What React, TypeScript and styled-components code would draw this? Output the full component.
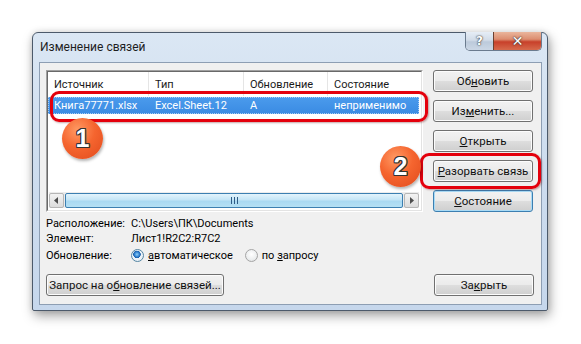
import React from "react";
import styled, { createGlobalStyle } from "styled-components";

const GlobalStyle = createGlobalStyle`
  html, body {
    margin: 0;
    padding: 0;
    background: #ffffff;
  }
  body {
    font-family: Roboto, "Noto Sans", sans-serif;
    font-size: 11px;
    color: #000;
  }
`;

const Stage = styled.div`
  position: relative;
  width: 581px;
  height: 344px;
  padding: 32px 0 0 32px;
  box-sizing: border-box;
`;

const Frame = styled.div`
  width: 516px;
  height: 279px;
  box-sizing: border-box;
  border: 1px solid #4c5a6b;
  border-radius: 6px 6px 2px 2px;
  background: linear-gradient(180deg, #dbe7f4 0%, #cfdeef 40%, #c6d7ec 100%);
  box-shadow: 2px 5px 12px rgba(0, 0, 0, 0.35), 0 0 6px rgba(0, 0, 0, 0.12);
  padding: 0 5px 5px 6px;
  display: flex;
  flex-direction: column;
`;

const TitleBar = styled.div`
  height: 29px;
  display: flex;
  align-items: flex-start;
  justify-content: space-between;
`;

const Title = styled.div`
  padding: 7px 0 0 1px;
  font-size: 12px;
  color: #1e1e1e;
`;

const Controls = styled.div`
  display: flex;
  margin-top: -1px;
  border: 1px solid #6b7b8e;
  border-top: none;
  border-radius: 0 0 5px 5px;
  overflow: hidden;
`;

const CtrlButton = styled.div<{ $close?: boolean }>`
  width: ${(p) => (p.$close ? "47px" : "27px")};
  height: 18px;
  display: flex;
  align-items: center;
  justify-content: center;
  font-family: "DejaVu Sans", sans-serif;
  font-weight: bold;
  font-size: ${(p) => (p.$close ? "14px" : "12px")};
  color: #fff;
  text-shadow: 0 0 2px #333, 0 0 1px #333;
  border-left: ${(p) => (p.$close ? "1px solid #6b4030" : "none")};
  background: ${(p) =>
    p.$close
      ? "linear-gradient(180deg, #eab59c 0%, #dc8e70 40%, #c8402a 55%, #d66a4c 100%)"
      : "linear-gradient(180deg, #e6edf6 0%, #d2dce8 45%, #bccadb 55%, #cbd7e5 100%)"};
`;

const Client = styled.div`
  flex: 1;
  border: 1px solid #8d9eb3;
  background: #f0f0f0;
  padding: 7px 7px 0 6px;
  display: flex;
  flex-direction: column;
`;

const TopArea = styled.div`
  display: flex;
  gap: 10px;
`;

const ListView = styled.div`
  width: 377px;
  height: 142px;
  box-sizing: border-box;
  border: 1px solid;
  border-color: #a0a0a0 #ffffff #ffffff #a0a0a0;
  display: flex;
`;

const ListInner = styled.div`
  flex: 1;
  border: 1px solid;
  border-color: #696969 #e3e3e3 #e3e3e3 #696969;
  background: #fff;
  display: flex;
  flex-direction: column;
`;

const HeaderRow = styled.div`
  display: grid;
  grid-template-columns: 101px 95px 84px 1fr;
  height: 24px;
`;

const HeaderCell = styled.div`
  display: flex;
  align-items: center;
  padding-left: 6px;
  border-right: 1px solid #e5e5e5;
  color: #1a1a1a;
  &:last-child {
    border-right: none;
  }
`;

const DataRow = styled.div`
  display: grid;
  grid-template-columns: 101px 95px 84px 1fr;
  height: 17px;
  margin: 1px 2px 0 0;
  background: linear-gradient(180deg, #4b9bec 0%, #3a8be3 100%);
  outline: 1px dotted #a8cdf5;
  outline-offset: -1px;
  color: #fff;
`;

const DataCell = styled.div`
  display: flex;
  align-items: center;
  padding-left: 6px;
  white-space: nowrap;
`;

const ListSpace = styled.div`
  flex: 1;
`;

const HScroll = styled.div`
  display: flex;
  align-items: center;
  height: 16px;
  gap: 1px;
  margin: 0 2px 2px 1px;
  background: #ececec;
`;

const ArrowBtn = styled.div`
  width: 15px;
  height: 15px;
  box-sizing: border-box;
  border: 1px solid #b6b6b6;
  border-radius: 2px;
  background: linear-gradient(180deg, #f3f3f3, #dcdcdc);
  display: flex;
  align-items: center;
  justify-content: center;
`;

const Thumb = styled.div`
  flex: 1;
  height: 15px;
  box-sizing: border-box;
  border: 1px solid #3c7fb1;
  border-radius: 2px;
  background: linear-gradient(180deg, #e3f4fc 0%, #c4e5f6 45%, #a9d9f2 55%, #b5e0f4 100%);
  display: flex;
  align-items: center;
  justify-content: center;
`;

const Grip = styled.div`
  display: flex;
  gap: 2px;
  span {
    width: 1px;
    height: 7px;
    background: #2e5c86;
  }
`;

const ButtonColumn = styled.div`
  display: flex;
  flex-direction: column;
  gap: 8px;
`;

const Button = styled.div<{ $width?: number; $default?: boolean }>`
  width: ${(p) => p.$width ?? 100}px;
  height: 22px;
  box-sizing: border-box;
  border: 1px solid ${(p) => (p.$default ? "#3c7fb1" : "#707070")};
  border-radius: 3px;
  background: linear-gradient(180deg, #f2f2f2 0%, #ebebeb 48%, #dddddd 52%, #cfcfcf 100%);
  box-shadow: inset 0 0 0 1px ${(p) => (p.$default ? "#a9dbf6" : "#fcfcfc")};
  display: flex;
  align-items: center;
  justify-content: center;
  font-size: 11.5px;
  color: #111;
  white-space: nowrap;
`;

const InfoArea = styled.div`
  display: flex;
  flex-direction: column;
  padding: 4px 0 0 0;
`;

const InfoRow = styled.div<{ $h?: number }>`
  display: flex;
  align-items: center;
  height: ${(p) => p.$h ?? 15}px;
`;

const InfoLabel = styled.div`
  width: 85px;
  white-space: nowrap;
`;

const RadioItem = styled.label`
  display: flex;
  align-items: center;
  gap: 4px;
  margin-right: 12px;
`;

const RadioDot = styled.span<{ $checked?: boolean }>`
  width: 13px;
  height: 13px;
  box-sizing: border-box;
  border-radius: 50%;
  border: 1px solid ${(p) => (p.$checked ? "#5586a3" : "#a5a5a5")};
  background: ${(p) =>
    p.$checked
      ? "radial-gradient(circle at 45% 40%, #8fd0f7 0, #2d7fd0 2.5px, #1c5fa8 3.5px, #eef4f9 4px, #dfe9f1 100%)"
      : "radial-gradient(circle at 50% 40%, #ffffff 0, #eceeef 60%, #d8dadc 100%)"};
`;

const BottomRow = styled.div`
  display: flex;
  justify-content: space-between;
  margin-top: 10px;
`;

const Highlight = styled.div<{ $x: number; $y: number; $w: number; $h: number }>`
  position: absolute;
  left: ${(p) => p.$x}px;
  top: ${(p) => p.$y}px;
  width: ${(p) => p.$w}px;
  height: ${(p) => p.$h}px;
  box-sizing: border-box;
  border: 3.5px solid #e4000c;
  border-radius: 9px;
  box-shadow: 1px 1px 2px rgba(90, 0, 0, 0.35);
`;

const Badge = styled.div<{ $x: number; $y: number }>`
  position: absolute;
  left: ${(p) => p.$x}px;
  top: ${(p) => p.$y}px;
  width: 41px;
  height: 41px;
  border-radius: 50%;
  background: radial-gradient(circle at 38% 30%, #ff9a64 0%, #f5652f 45%, #e14a1c 100%);
  box-shadow: 1px 2px 3px rgba(0, 0, 0, 0.3);
  display: flex;
  align-items: center;
  justify-content: center;
  font-family: "Liberation Sans", Arial, sans-serif;
  font-weight: bold;
  font-size: 25px;
  color: #fff;
  text-shadow: -1px -1px 0 #333, 1px -1px 0 #333, -1px 1px 0 #333, 1px 1px 0 #333,
    0 1px 0 #333, 0 -1px 0 #333, 1px 0 0 #333, -1px 0 0 #333;
`;

const App: React.FC = () => {
  return (
    <>
      <GlobalStyle />
      <Stage>
        <Frame>
          <TitleBar>
            <Title>Изменение связей</Title>
            <Controls>
              <CtrlButton>?</CtrlButton>
              <CtrlButton $close>✕</CtrlButton>
            </Controls>
          </TitleBar>
          <Client>
            <TopArea>
              <ListView>
                <ListInner>
                  <HeaderRow>
                    <HeaderCell>Источник</HeaderCell>
                    <HeaderCell>Тип</HeaderCell>
                    <HeaderCell>Обновление</HeaderCell>
                    <HeaderCell>Состояние</HeaderCell>
                  </HeaderRow>
                  <DataRow>
                    <DataCell>Книга77771.xlsx</DataCell>
                    <DataCell>Excel.Sheet.12</DataCell>
                    <DataCell>A</DataCell>
                    <DataCell>неприменимо</DataCell>
                  </DataRow>
                  <ListSpace />
                  <HScroll>
                    <ArrowBtn>
                      <svg width="5" height="7" viewBox="0 0 5 7">
                        <path d="M4 0 L0 3.5 L4 7 Z" fill="#4d4d4d" />
                      </svg>
                    </ArrowBtn>
                    <Thumb>
                      <Grip>
                        <span />
                        <span />
                        <span />
                      </Grip>
                    </Thumb>
                    <ArrowBtn>
                      <svg width="5" height="7" viewBox="0 0 5 7">
                        <path d="M1 0 L5 3.5 L1 7 Z" fill="#4d4d4d" />
                      </svg>
                    </ArrowBtn>
                  </HScroll>
                </ListInner>
              </ListView>
              <ButtonColumn>
                <Button>
                  <span>
                    Об<u>н</u>овить
                  </span>
                </Button>
                <Button>
                  <span>
                    Из<u>м</u>енить...
                  </span>
                </Button>
                <Button>
                  <span>
                    <u>О</u>ткрыть
                  </span>
                </Button>
                <Button>
                  <span>
                    <u>Р</u>азорвать связь
                  </span>
                </Button>
                <Button $default>
                  <span>
                    <u>С</u>остояние
                  </span>
                </Button>
              </ButtonColumn>
            </TopArea>
            <InfoArea>
              <InfoRow>
                <InfoLabel>Расположение:</InfoLabel>
                <span>C:\Users\ПК\Documents</span>
              </InfoRow>
              <InfoRow>
                <InfoLabel>Элемент:</InfoLabel>
                <span>Лист1!R2C2:R7C2</span>
              </InfoRow>
              <InfoRow $h={18}>
                <InfoLabel>Обновление:</InfoLabel>
                <RadioItem>
                  <RadioDot $checked />
                  <span>
                    <u>а</u>втоматическое
                  </span>
                </RadioItem>
                <RadioItem>
                  <RadioDot />
                  <span>
                    по <u>з</u>апросу
                  </span>
                </RadioItem>
              </InfoRow>
            </InfoArea>
            <BottomRow>
              <Button $width={178}>
                <span>
                  Запрос на о<u>б</u>новление связей...
                </span>
              </Button>
              <Button>
                <span>
                  За<u>к</u>рыть
                </span>
              </Button>
            </BottomRow>
          </Client>
        </Frame>
        <Highlight $x={50} $y={91} $w={378} $h={31} />
        <Highlight $x={420} $y={153} $w={121} $h={36} />
        <Badge $x={62} $y={118}>1</Badge>
        <Badge $x={380} $y={146}>2</Badge>
      </Stage>
    </>
  );
};

export default App;
